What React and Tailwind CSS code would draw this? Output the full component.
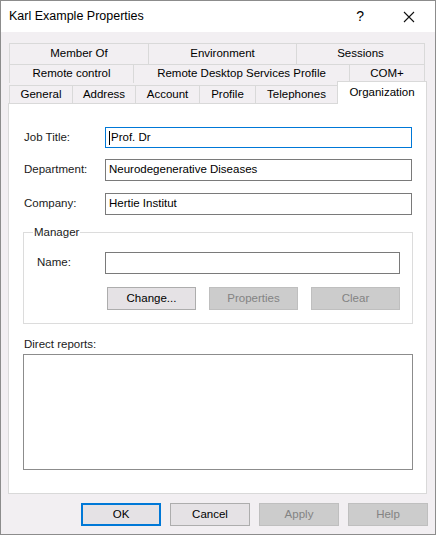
const font = { fontFamily: '"Liberation Sans", Arial, sans-serif' };

const Tab = ({ label, w, active }) => (
  <div
    className={`flex items-center justify-center border-t border-l border-r border-[#d9d9d9] -ml-px first:ml-0 text-[11.5px] text-black ${active ? 'bg-white' : 'bg-[#f2eff2]'}`}
    style={{ width: w }}
  >
    {label}
  </div>
);

const Field = ({ label, value, focused, caret, h = 'h-[22px]', mt = '' }) => (
  <div className={`flex items-center ${h} ${mt}`}>
    <div className="w-[96px] pl-[15px] text-[11.5px] text-[#1a1a1a]">{label}</div>
    <div
      className={`w-[307px] ${h} flex items-center px-[3px] bg-white text-[11.5px] text-black border ${focused ? 'border-[#0078d7]' : 'border-[#7a7a7a]'}`}
    >
      {caret && <span className="w-px h-[14px] bg-black mr-px" />}
      {value}
    </div>
  </div>
);

const Btn = ({ label, disabled, primary, w = 'w-[80px]' }) => (
  <div
    className={`${w} h-[23px] flex items-center justify-center text-[11.5px] border ${
      disabled
        ? 'bg-[#cccccc] border-[#bfbfbf] text-[#838383]'
        : primary
        ? 'bg-[#e5e2e5] border-2 border-[#0078d7] text-black'
        : 'bg-[#e5e2e5] border-[#adadad] text-black'
    }`}
  >
    {label}
  </div>
);

export default function App() {
  return (
    <div className="w-[436px] h-[536px] bg-white" style={font}>
      <div className="w-[436px] h-[535px] border border-[#8c8c8c] flex flex-col">
        <div className="h-[31px] bg-white flex items-center pl-[8px] shrink-0">
          <span className="text-[12.5px] text-black">Karl Example Properties</span>
          <span className="ml-auto text-[14px] text-black mr-[39px]">?</span>
          <svg width="12" height="12" viewBox="0 0 12 12" className="mr-[20px]">
            <path d="M1 1 L11 11 M11 1 L1 11" stroke="#111" strokeWidth="1.1" />
          </svg>
        </div>
        <div className="flex-1 bg-[#f2eff2] flex flex-col px-[7px]">
          <div className="mt-[11px] pl-[1px] flex flex-col">
            <div className="flex h-[21px]">
              <Tab label="Member Of" w={140} />
              <Tab label="Environment" w={149} />
              <Tab label="Sessions" w={129} />
            </div>
            <div className="flex h-[19px]">
              <Tab label="Remote control" w={125} />
              <Tab label="Remote Desktop Services Profile" w={217} />
              <Tab label="COM+" w={76} />
            </div>
            <div className="flex h-[20px] items-end">
              <Tab label="General" w={64} />
              <Tab label="Address" w={64} />
              <Tab label="Account" w={65} />
              <Tab label="Profile" w={57} />
              <Tab label="Telephones" w={83} />
              <div className="w-[90px] h-[23px] -ml-px -mb-px relative z-10 bg-white border-t border-l border-r border-[#d9d9d9] flex justify-center pt-[2px] text-[11.5px] text-black">
                Organization
              </div>
            </div>
          </div>
          <div className="w-[419px] h-[391px] bg-white border border-[#d9d9d9] flex flex-col">
            <div className="mt-[23px] flex flex-col">
              <Field label="Job Title:" value="Prof. Dr" focused caret h="h-[21px]" />
              <Field label="Department:" value="Neurodegenerative Diseases" mt="mt-[11px]" />
              <Field label="Company:" value="Hertie Institut" mt="mt-[12px]" />
            </div>
            <div className="mt-[17px] ml-[14px] w-[390px] h-[92px] border border-[#dcdcdc] relative flex flex-col">
              <span className="absolute -top-[8px] left-[9px] px-[1px] bg-white text-[11.5px] text-[#1a1a1a] leading-[14px]">
                Manager
              </span>
              <div className="mt-[19px] flex items-center h-[22px]">
                <div className="w-[81px] pl-[13px] text-[11.5px] text-[#1a1a1a]">Name:</div>
                <div className="w-[295px] h-[22px] bg-white border border-[#7a7a7a]" />
              </div>
              <div className="mt-[13px] ml-[83px] flex gap-[13px]">
                <Btn label="Change..." w="w-[89px]" />
                <Btn label="Properties" disabled w="w-[89px]" />
                <Btn label="Clear" disabled w="w-[89px]" />
              </div>
            </div>
            <div className="mt-[13px] pl-[15px] text-[11.5px] text-[#1a1a1a] leading-[14px]">Direct reports:</div>
            <div className="mt-[3px] ml-[14px] w-[390px] h-[116px] bg-white border border-[#8c8c8c]" />
          </div>
          <div className="mt-[9px] flex justify-end gap-[9px]">
            <Btn label="OK" primary />
            <Btn label="Cancel" />
            <Btn label="Apply" disabled />
            <Btn label="Help" disabled />
          </div>
        </div>
      </div>
    </div>
  );
}
